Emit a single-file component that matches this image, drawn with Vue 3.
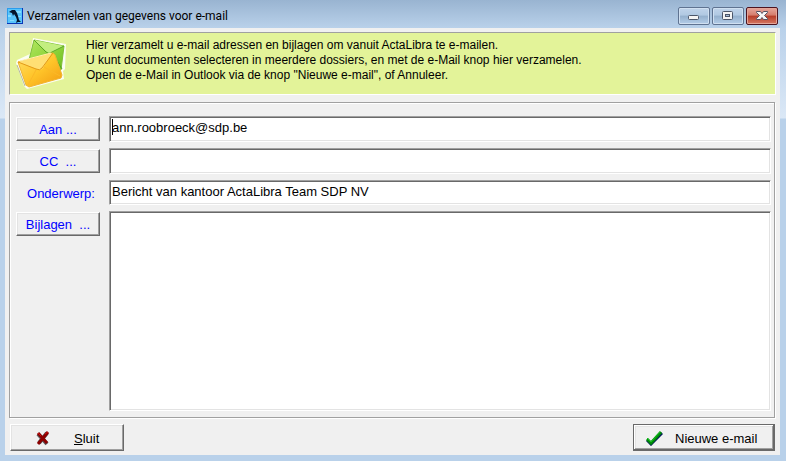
<script setup>
import { ref } from 'vue'

const to = ref('ann.roobroeck@sdp.be')
const cc = ref('')
const subject = ref('Bericht van kantoor ActaLibra Team SDP NV')
const attachments = ref('')
</script>

<template>
  <div class="window">
    <header class="titlebar">
      <svg class="app-icon" width="16" height="16" viewBox="0 0 16 16" aria-hidden="true">
        <rect width="16" height="16" fill="#58c4fb" />
        <path d="M0 0h15v1H0zM0 0h1v15H0z" fill="#2c9cec" />
        <path d="M9 3h5v2H9zM1 7h3v2H1zM3 12h4v1H3zM11 8h3v1h-3z" fill="#86dcff" />
        <path d="M15 0h1v16H0v-1h15z" fill="#0838b8" />
        <path d="M2 4L5 2H8L10 5L11 8L12 12L14 14H11L9 15L10 12L9 9L7 6L6 8L5 5Z" fill="#04142c" />
      </svg>
      <h1 class="title">Verzamelen van gegevens voor e-mail</h1>
      <div class="controls">
        <button class="control" type="button" aria-label="Minimaliseren">
          <svg width="30" height="16" viewBox="0 0 30 16"><rect x="9.500" y="7.500" width="10" height="4" rx="1" fill="#f4f4f4" stroke="#4c5669" /></svg>
        </button>
        <button class="control" type="button" aria-label="Maximaliseren">
          <svg width="30" height="16" viewBox="0 0 30 16">
            <rect x="9.500" y="3.500" width="10" height="8" rx="1" fill="#f4f4f4" stroke="#4c5669" />
            <rect x="12.500" y="6.500" width="4" height="2" fill="#a5bdd8" stroke="#4c5669" />
          </svg>
        </button>
        <button class="control close" type="button" aria-label="Venster sluiten">
          <svg width="30" height="16" viewBox="0 0 30 16"><path d="M9.500 3.500h4l1.500 2 1.500-2h4v1l-3 3 3 3v1h-4l-1.500-2-1.500 2h-4v-1l3-3-3-3z" fill="#f6f6f6" stroke="#565263" /></svg>
        </button>
      </div>
    </header>

    <main class="client">
      <section class="banner">
        <svg class="mail-icon" width="52" height="52" viewBox="0 0 52 52" aria-hidden="true">
          <defs>
            <linearGradient id="gold" x1="0" y1="0" x2="1" y2="1">
              <stop offset="0" stop-color="#ffe06a" />
              <stop offset="0.500" stop-color="#ffc52a" />
              <stop offset="1" stop-color="#f19a10" />
            </linearGradient>
            <linearGradient id="leaf" x1="0" y1="0" x2="1" y2="1">
              <stop offset="0" stop-color="#b4e860" />
              <stop offset="1" stop-color="#6cc01c" />
            </linearGradient>
          </defs>
          <path d="M17 0l33 6-1 25-2 2 1 8-37 10-3-3L0 25l1-3 13-6z" fill="#fbfdf2" />
          <path d="M1 27l8 21" stroke="#b5b8a0" stroke-width="1" />
          <path d="M18 2l30 6-3 24-32-10z" fill="url(#leaf)" stroke="#7fbd38" />
          <path d="M18 2l15 14 15-8z" fill="#c3ee80" />
          <path d="M18 2l12 12q3 3 6 0l12-6M36 15l10 16" fill="none" stroke="#58a524" />
          <path d="M2 24l34-9q2 0 3 2l7 20-1 3-32 9-3-2z" fill="url(#gold)" stroke="#f0b530" />
          <path d="M2 24l34-9-9 15q-2 3-6 1z" fill="#ffdf74" />
          <path d="M2 24l18 7q4 2 6-1l11-15" fill="none" stroke="#e39a18" />
          <path d="M12 47l8-15M28 29l16 9" fill="none" stroke="#fbb828" />
          <path d="M4 23l31-8" stroke="#fff1b0" />
        </svg>
        <p class="intro">
          Hier verzamelt u e-mail adressen en bijlagen om vanuit ActaLibra te e-mailen.<br />
          U kunt documenten selecteren in meerdere dossiers, en met de e-Mail knop hier verzamelen.<br />
          Open de e-Mail in Outlook via de knop "Nieuwe e-mail", of Annuleer.
        </p>
      </section>

      <form class="group" @submit.prevent>
        <button id="to-button" class="button pick" type="button">Aan ...</button>
        <div class="caret-box">
          <input v-model="to" class="field" type="text" aria-labelledby="to-button" />
          <span class="caret"></span>
        </div>
        <button id="cc-button" class="button pick" type="button">CC&nbsp; ...</button>
        <input v-model="cc" class="field" type="text" aria-labelledby="cc-button" />
        <label class="caption" for="subject">Onderwerp:</label>
        <input id="subject" v-model="subject" class="field" type="text" />
        <button id="files-button" class="button pick" type="button">Bijlagen&nbsp; ...</button>
        <textarea v-model="attachments" class="field files" aria-labelledby="files-button"></textarea>
      </form>

      <footer class="actions">
        <button class="button action" type="button">
          <svg width="14" height="15" viewBox="0 0 14 15" aria-hidden="true">
            <path d="M2 3l9 10M11 2L3 12" fill="none" stroke="#58585c" stroke-width="4" />
            <path d="M2 2l9 10M12 1L2 13" fill="none" stroke="#8c0000" stroke-width="3" />
            <path d="M2 2l3 3M9 3l3-2" stroke="#d01010" />
          </svg>
          <span><u>S</u>luit</span>
        </button>
        <button class="button action default" type="submit">
          <svg width="17" height="15" viewBox="0 0 17 15" aria-hidden="true">
            <path d="M1 9l4 4L16 2" fill="none" stroke="#001858" stroke-width="3" />
            <path d="M1 8l4 4L15 1" fill="none" stroke="#008a08" stroke-width="3" />
            <path d="M1 7l4 4L14 1" fill="none" stroke="#10c820" />
          </svg>
          <span>Nieuwe e-mail</span>
        </button>
      </footer>
    </main>
  </div>
</template>

<style>
body {
  margin: 0;
}
</style>

<style scoped>
* {
  box-sizing: border-box;
}

.window {
  display: flex;
  flex-direction: column;
  min-height: 100vh;
  padding: 0 6px 6px 5px;
  background: linear-gradient(#99b4d1 0, #b9d1ea 28px, #dbe8f6 118px, #b9d1ea 119px);
  font-family: "Liberation Sans", Arial, sans-serif;
  font-size: 13px;
  color: #000;
}

.titlebar {
  display: flex;
  align-items: center;
  height: 28px;
  padding: 4px 2px 0;
}

.app-icon {
  flex: none;
}

.title {
  flex: 1;
  margin: 0 0 0 4px;
  font: 400 12px/16px Roboto, "Noto Sans", sans-serif;
}

.controls {
  display: flex;
  gap: 2px;
}

.control {
  display: flex;
  width: 32px;
  height: 18px;
  padding: 0;
  border: 1px solid #5f7391;
  border-radius: 2px;
  background: linear-gradient(#c0d4ea 0, #b0c8e2 45%, #94b0cd 50%, #b4cde8 100%);
  box-shadow: inset 0 0 0 1px #d0e0f1;
}

.control.close {
  border-color: #4d1420;
  background: linear-gradient(#e5a79c 0, #d57c6c 45%, #b63c28 50%, #d57862 100%);
  box-shadow: inset 0 0 0 1px #e4a598;
}

.client {
  flex: 1;
  display: flex;
  flex-direction: column;
  padding: 4px;
  background: #f0f0f0;
}

.banner {
  display: flex;
  gap: 18px;
  height: 63px;
  padding: 5px 6px;
  border: 1px solid;
  border-color: #a0a0a0 #fff #fff #a0a0a0;
  background: #e3f399;
}

.mail-icon {
  flex: none;
}

.intro {
  margin: 0;
  font-size: 12px;
  line-height: 15px;
}

.group {
  flex: 1;
  display: grid;
  grid-template-columns: 84px 1fr;
  grid-template-rows: 26px 26px 25px 1fr;
  gap: 6px 9px;
  margin: 7px 1px 0 0;
  padding: 13px 3px 6px 6px;
  border: 1px solid #a0a0a0;
  box-shadow: inset 1px 1px #fff, 1px 1px #fff;
}

.button {
  border: 1px solid;
  border-color: #fff #696969 #696969 #fff;
  background: #f0f0f0;
  box-shadow: inset -1px -1px #a0a0a0, inset 1px 1px #e3e3e3;
  color: inherit;
  font: inherit;
}

.pick {
  height: 24px;
  margin-top: 1px;
  padding: 0;
  color: #00f;
}

.caption {
  justify-self: center;
  padding: 0 0 0 6px;
  line-height: 27px;
  color: #00f;
}

.field {
  width: 100%;
  height: 100%;
  margin: 0;
  padding: 0 1px 3px;
  border: 1px solid;
  border-color: #a0a0a0 #fff #fff #a0a0a0;
  border-radius: 0;
  outline: 0;
  background: #fff;
  box-shadow: inset 1px 1px #696969, inset -1px -1px #e3e3e3;
  color: inherit;
  font: inherit;
  text-indent: 1px;
}

.files {
  min-height: 80px;
  resize: none;
}

.caret-box {
  position: relative;
}

.caret {
  position: absolute;
  top: 3px;
  left: 3px;
  width: 1px;
  height: 16px;
  background: #000;
}

.actions {
  display: flex;
  justify-content: space-between;
  margin-top: 6px;
  padding: 0 1px;
}

.action {
  display: flex;
  align-items: center;
  gap: 24px;
  width: 114px;
  height: 27px;
  padding: 1px 0 0 25px;
}

.default {
  gap: 12px;
  width: 142px;
  padding-left: 12px;
  border-color: #696969;
  box-shadow: inset -1px -1px #696969, inset 1px 1px #fff, inset -2px -2px #a0a0a0, inset 2px 2px #e3e3e3;
}
</style>
